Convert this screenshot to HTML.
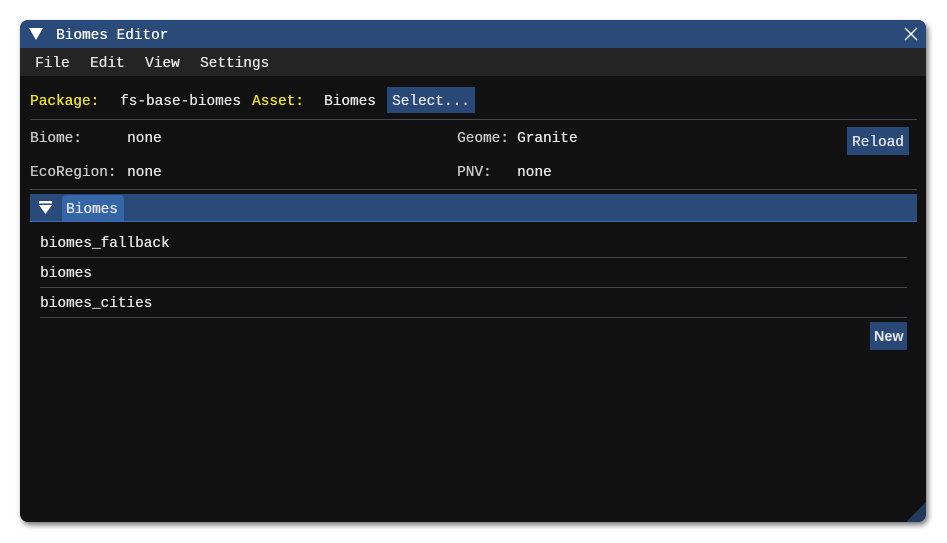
<!DOCTYPE html>
<html><head><style>
body{margin:0;width:947px;height:543px;background:#fff;position:relative;overflow:hidden;font-family:"Liberation Mono","DejaVu Sans Mono",monospace;font-size:14.4px;color:#e6e6e6}
.a{position:absolute;white-space:pre;line-height:1;text-shadow:0.3px 0 0 currentColor}
#win{position:absolute;left:20px;top:20px;width:906px;height:502px;background:#111;border-radius:8px;overflow:hidden;box-shadow:2px 3px 6px rgba(0,0,0,.55)}
.y{color:#f2e51a}
.g{color:#c8c8c8}
.btn{position:absolute;background:#284878}
.ln{position:absolute;height:1px;background:#45454d}
</style></head><body>
<div id="win">
<div style="position:absolute;left:0;top:0;width:906px;height:28px;background:#2a4a7a"></div>
<svg class="a" style="left:9px;top:8px" width="14" height="12"><polygon points="0,0 14,0 7,12" fill="#fff"/></svg>
<div class="a" style="left:36px;top:9px;color:#fff">Biomes Editor</div>
<svg class="a" style="left:884px;top:7px" width="14" height="14"><path d="M1 1L13 13M13 1L1 13" stroke="#fff" stroke-width="1.4"/></svg>
<div style="position:absolute;left:0;top:28px;width:906px;height:28px;background:#242424"></div>
<div class="a" style="left:15px;top:37px">File</div>
<div class="a" style="left:70px;top:37px">Edit</div>
<div class="a" style="left:125px;top:37px">View</div>
<div class="a" style="left:180px;top:37px">Settings</div>
<div class="a y" style="left:10px;top:75px">Package:</div>
<div class="a" style="left:100px;top:75px">fs-base-biomes</div>
<div class="a y" style="left:232px;top:75px">Asset:</div>
<div class="a" style="left:304px;top:75px">Biomes</div>
<div class="btn" style="left:367px;top:67px;width:88px;height:26px"></div>
<div class="a" style="left:372px;top:75px">Select...</div>
<div class="ln" style="left:10px;top:99px;width:887px"></div>
<div class="a g" style="left:10px;top:112px">Biome:</div>
<div class="a" style="left:107px;top:112px">none</div>
<div class="a g" style="left:437px;top:112px">Geome:</div>
<div class="a" style="left:497px;top:112px">Granite</div>
<div class="btn" style="left:827px;top:107px;width:62px;height:28px"></div>
<div class="a" style="left:832px;top:116px">Reload</div>
<div class="a g" style="left:10px;top:146px">EcoRegion:</div>
<div class="a" style="left:107px;top:146px">none</div>
<div class="a g" style="left:437px;top:146px">PNV:</div>
<div class="a" style="left:497px;top:146px">none</div>
<div class="ln" style="left:10px;top:169px;width:887px"></div>
<div style="position:absolute;left:10px;top:174px;width:887px;height:27px;background:#2a4a7a;border-bottom:1px solid #3a6ab0"></div>
<svg class="a" style="left:19px;top:181px" width="14" height="14"><rect x="0" y="0" width="13" height="2.5" fill="#fff"/><polygon points="0,4 13,4 6.5,13" fill="#fff"/></svg>
<div style="position:absolute;left:42px;top:175px;width:62px;height:26px;background:#3466a8;border-radius:4px 4px 0 0"></div>
<div class="a" style="left:46px;top:183px">Biomes</div>
<div class="a" style="left:20px;top:217px">biomes_fallback</div>
<div class="ln" style="left:20px;top:237px;width:867px"></div>
<div class="a" style="left:20px;top:247px">biomes</div>
<div class="ln" style="left:20px;top:267px;width:867px"></div>
<div class="a" style="left:20px;top:277px">biomes_cities</div>
<div class="ln" style="left:20px;top:297px;width:867px"></div>
<div class="btn" style="left:850px;top:302px;width:37px;height:28px"></div>
<div class="a" style="left:854px;top:310px;font-family:'Liberation Sans',sans-serif;font-weight:bold;text-shadow:none">New</div>
<svg class="a" style="left:886px;top:482px" width="20" height="20"><polygon points="20,0 20,20 0,20" fill="#223a5e"/></svg>
</div>
</body></html>
